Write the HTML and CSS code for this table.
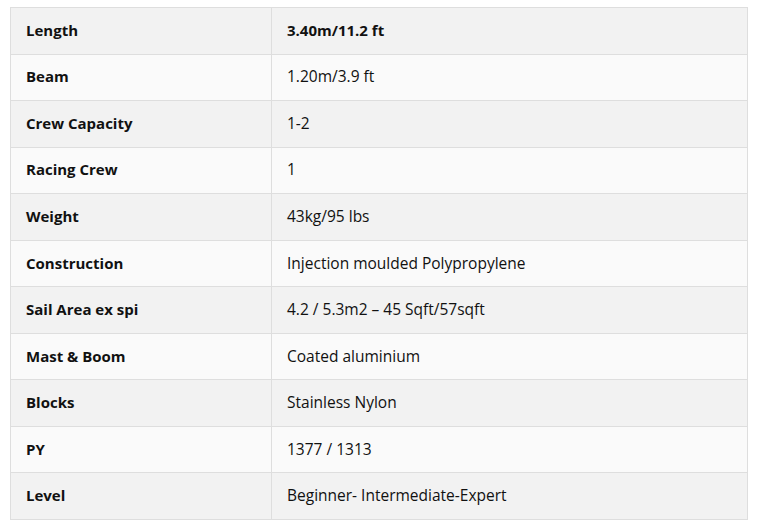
FILE: index.html
```html
<!DOCTYPE html>
<html>
<head>
<meta charset="utf-8">
<link rel="stylesheet" href="styles.css">
</head>
<body>
<table class="specs">
<tbody>
<tr><td class="label">Length</td><td class="value strong">3.40m/11.2 ft</td></tr>
<tr><td class="label">Beam</td><td class="value">1.20m/3.9 ft</td></tr>
<tr><td class="label">Crew Capacity</td><td class="value">1-2</td></tr>
<tr><td class="label">Racing Crew</td><td class="value">1</td></tr>
<tr><td class="label">Weight</td><td class="value">43kg/95 lbs</td></tr>
<tr><td class="label">Construction</td><td class="value">Injection moulded Polypropylene</td></tr>
<tr><td class="label">Sail Area ex spi</td><td class="value">4.2 / 5.3m2 – 45 Sqft/57sqft</td></tr>
<tr><td class="label">Mast &amp; Boom</td><td class="value">Coated aluminium</td></tr>
<tr><td class="label">Blocks</td><td class="value">Stainless Nylon</td></tr>
<tr><td class="label">PY</td><td class="value">1377 / 1313</td></tr>
<tr><td class="label">Level</td><td class="value">Beginner- Intermediate-Expert</td></tr>
</tbody>
</table>
</body>
</html>
```
FILE: styles.css
```css
html, body {
  margin: 0;
  background: #fff;
}
body {
  padding: 7px 10px 0 10px;
  font-family: "Open Sans", "Noto Sans", sans-serif;
  font-size: 15.5px;
  color: #111;
}
.specs {
  width: 738px;
  border-collapse: collapse;
  table-layout: fixed;
}
.specs td {
  border: 1px solid #dedede;
  height: 46.55px;
  padding: 0 15px 2px 15px;
  vertical-align: middle;
  box-sizing: border-box;
}
.specs tr:nth-child(odd) td { background: #f2f2f2; }
.specs tr:nth-child(even) td { background: #fafafa; }
.specs td.label {
  width: 261px;
  font-weight: 700;
  font-size: 15px;
}
.specs td.strong { font-weight: 700; font-size: 15px; }
```
